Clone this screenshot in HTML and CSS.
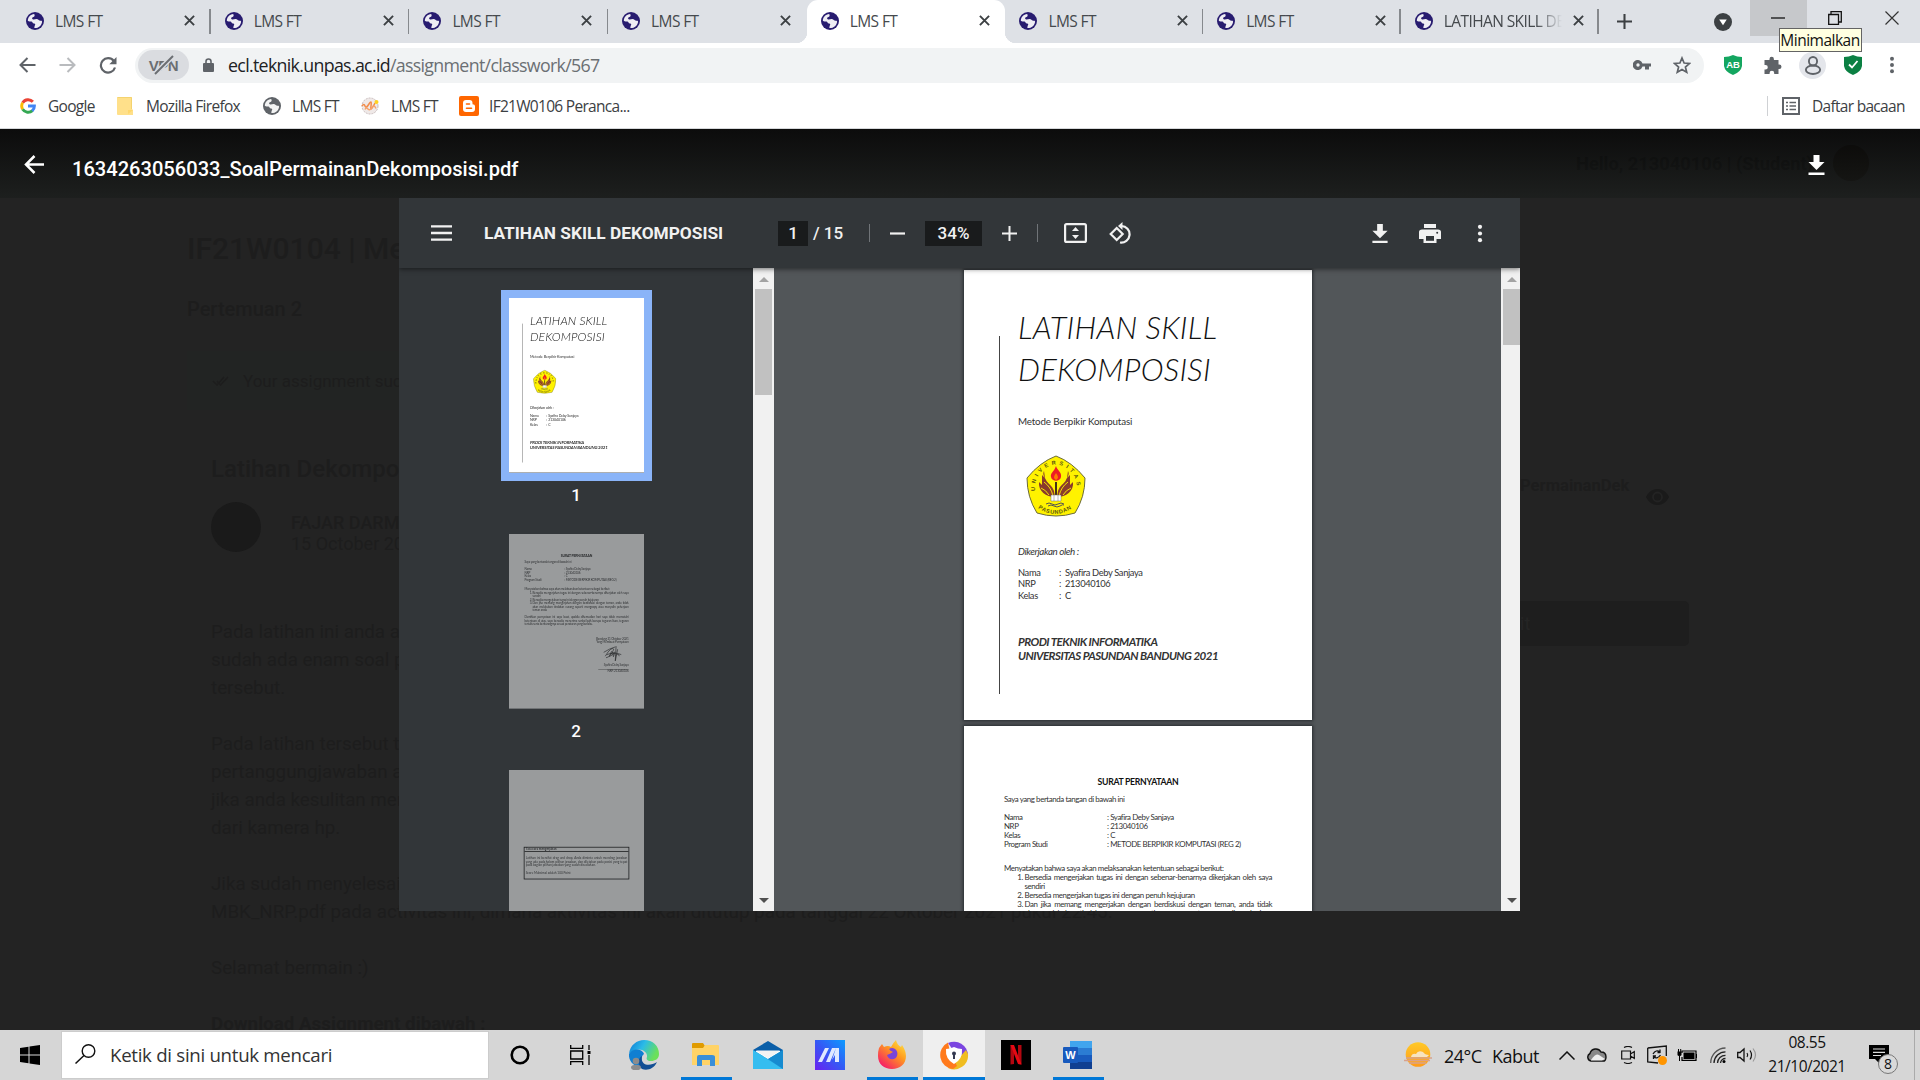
FILE: index.html
```html
<!DOCTYPE html>
<html lang="id">
<head>
<meta charset="utf-8">
<title>LMS FT</title>
<link rel="stylesheet" href="styles.css">
</head>
<body>
<svg class="defs" aria-hidden="true">
  <symbol id="globe" viewBox="0 0 18 18"><circle cx="9" cy="9" r="9" fill="currentColor"/><path d="M8.2 1.9C4.5 2.2 1.9 5 1.8 8.700C3 9.800 4.200 9 5.500 9.600C7 10.200 6.200 11.500 8 11.600C9.600 11.700 9.500 13 8.600 14L8.300 16.100C12.600 16.300 16 13 16.100 9.400C15.700 8.300 14.600 8.900 13.500 8.500C12 8 12.300 6.900 10.500 7C8.900 7.100 8 8.100 6.700 7.200C5.500 6.400 6.300 5.200 7.500 4.900C8.900 4.500 8.900 3.100 8.200 1.900Z" fill="#fff" opacity=".92"/></symbol>
  <symbol id="x" viewBox="0 0 12 12"><path d="M1 1L11 11M11 1L1 11" stroke="#3c4043" stroke-width="2.100" fill="none"/></symbol>
  <symbol id="dl" viewBox="0 0 16 20"><path d="M5 0H11V7H16L8 15L0 7H5ZM0 17.500H16V20H0Z" fill="currentColor"/></symbol>
  <symbol id="dots" viewBox="0 0 6 20"><g fill="currentColor"><circle cx="3" cy="3" r="2.200"/><circle cx="3" cy="10" r="2.200"/><circle cx="3" cy="17" r="2.200"/></g></symbol>
  <symbol id="crest" viewBox="0 0 60 62">
    <path d="M30 1Q46 7 59 23Q59 42 49 58Q30 64 11 58Q1 42 1 23Q14 7 30 1Z" fill="#fff200" stroke="#6b6b3a" stroke-width="1"/>
    <path d="M18 16C16 20 19 22 20 25C22 29 26 30 28 36L29 42C20 42 12 36 13 27L16 30V20L19 23ZM42 16C44 20 41 22 40 25C38 29 34 30 32 36L31 42C40 42 48 36 47 27L44 30V20L41 23Z" fill="#8a3b2c"/>
    <path d="M18 27Q25 32 27 41M42 27Q35 32 33 41M15 33Q20 35 23 40M45 33Q40 35 37 40" stroke="#fff200" stroke-width=".9" fill="none"/>
    <path d="M30 11C31 15 36 17 35 22C34 27 26 27 25 22C24 18 28 17 30 11Z" fill="#ed1c24"/><path d="M30 18Q34 23 30 25Q26 23 30 18Z" fill="#ff7a00"/>
    <path d="M29 27H31V40H29Z" fill="#443018"/>
    <path d="M25 40H35V46H25Z" fill="#fff" stroke="#776" stroke-width=".5"/><path d="M28 40V46M32 40V46" stroke="#776" stroke-width=".5"/>
    <path d="M20 49Q23 47 26 49T32 49T38 49M22 51Q25 49 28 51T34 51T38 50" fill="none" stroke="#555" stroke-width="1"/>
    <path id="arcTop" d="M9 36C8 18 21 10 30 9.500C39 10 52 18 51 36" fill="none"/>
    <path id="arcBottom" d="M12 53Q30 66 49 51" fill="none"/>
    <text font-size="5.600" class="crest-text"><textPath href="#arcTop" textLength="70">UNIVERSITAS</textPath></text>
    <text font-size="5.600" class="crest-text"><textPath href="#arcBottom" textLength="36">PASUNDAN</textPath></text>
  </symbol>
</svg>

<header class="browser">
  <div class="tabs">
    <div class="tab"><svg class="fav"><use href="#globe"/></svg><span>LMS FT</span><svg class="close"><use href="#x"/></svg></div>
    <div class="tab"><svg class="fav"><use href="#globe"/></svg><span>LMS FT</span><svg class="close"><use href="#x"/></svg></div>
    <div class="tab"><svg class="fav"><use href="#globe"/></svg><span>LMS FT</span><svg class="close"><use href="#x"/></svg></div>
    <div class="tab bare"><svg class="fav"><use href="#globe"/></svg><span>LMS FT</span><svg class="close"><use href="#x"/></svg></div>
    <div class="tab active"><svg class="fav"><use href="#globe"/></svg><span>LMS FT</span><svg class="close"><use href="#x"/></svg></div>
    <div class="tab late"><svg class="fav"><use href="#globe"/></svg><span>LMS FT</span><svg class="close"><use href="#x"/></svg></div>
    <div class="tab late"><svg class="fav"><use href="#globe"/></svg><span>LMS FT</span><svg class="close"><use href="#x"/></svg></div>
    <div class="tab late"><svg class="fav"><use href="#globe"/></svg><span class="long">LATIHAN SKILL DEK</span><svg class="close"><use href="#x"/></svg></div>
    <svg class="newtab" viewBox="0 0 16 16"><path d="M8 0V16M0 8H16" stroke="#3c4043" stroke-width="2.200"/></svg>
    <svg class="tabsearch" viewBox="0 0 18 18"><circle cx="9" cy="9" r="9" fill="#3c4043"/><path d="M5.200 6.500H12.800L9 12.300Z" fill="#fff"/></svg>
    <div class="win win-min"><svg width="14" height="14" viewBox="0 0 14 14"><path d="M0 7H14" stroke="#111" stroke-width="1.300"/></svg><span class="tooltip">Minimalkan</span></div>
    <div class="win"><svg width="14" height="14" viewBox="0 0 14 14"><path d="M.7 3.500H10.500V13.300H.7ZM3 3.500V.7H13.300V11H10.500" stroke="#111" stroke-width="1.300" fill="none"/></svg></div>
    <div class="win win-x"><svg width="14" height="14" viewBox="0 0 14 14"><path d="M.5 .5L13.500 13.500M13.500 .5L.5 13.500" stroke="#333" stroke-width="1.200"/></svg></div>
  </div>

  <div class="toolbar">
    <svg class="nav" width="17" height="16" viewBox="0 0 17 16"><path d="M16.500 8H1.500M8.500 1L1.500 8L8.500 15" fill="none" stroke="#5f6368" stroke-width="2"/></svg>
    <svg class="nav" width="17" height="16" viewBox="0 0 17 16"><path d="M.5 8H15.500M8.500 1L15.500 8L8.500 15" fill="none" stroke="#b9bbbe" stroke-width="2"/></svg>
    <svg class="nav" width="18" height="17" viewBox="0 0 18 17"><path d="M14.800 4A7.200 7.200 0 1 0 16 10.500" fill="none" stroke="#5f6368" stroke-width="2.200"/><path d="M17.500 0V7.200H10.300Z" fill="#5f6368"/></svg>
    <div class="omnibox">
      <div class="vpn"><span>VPN</span><svg viewBox="0 0 24 20"><path d="M3 19L21 1" stroke="#dadce0" stroke-width="5"/><path d="M3 19L21 1" stroke="#6b6e72" stroke-width="2"/></svg></div>
      <svg class="lock" viewBox="0 0 11 14"><path d="M3 6V3.500A2.500 2.500 0 0 1 8 3.500V6" fill="none" stroke="#5f6368" stroke-width="1.600"/><rect y="5" width="11" height="9" rx="1" fill="#5f6368"/></svg>
      <div class="url"><b>ecl.teknik.unpas.ac.id</b>/assignment/classwork/567</div>
      <svg class="key" viewBox="0 0 18 10"><path d="M9.500 3.500A5 5 0 1 0 9.500 6.500H12V9.500H16V6.500H18V3.500ZM5 3.300A1.700 1.700 0 1 1 5 6.700A1.700 1.700 0 0 1 5 3.300Z" fill="#5f6368" fill-rule="evenodd"/></svg>
      <svg class="star" viewBox="0 0 18 17"><path d="M9 1.500L11.100 6.500L16.500 7L12.400 10.500L13.700 15.700L9 12.900L4.300 15.700L5.600 10.500L1.500 7L6.900 6.500Z" fill="none" stroke="#5f6368" stroke-width="1.700"/></svg>
    </div>
    <svg class="ext shield" viewBox="0 0 18 20"><path d="M9 0Q13 2 18 2V11Q17 17 9 20Q1 17 0 11V2Q5 2 9 0Z" fill="#14a660"/><text x="9" y="13" class="ab" text-anchor="middle">AB</text></svg>
    <svg class="ext puzzle" viewBox="0 0 18 18"><path d="M2 4H6V3A2.200 2.200 0 0 1 10.400 3V4H15V8.500H15.700A2.300 2.300 0 0 1 15.700 13.100H15V18H10.700V17A2.300 2.300 0 0 0 6.100 17V18H1V13.500H2A2.300 2.300 0 0 0 2 8.900H1V4Z" fill="#5f6368"/></svg>
    <div class="ext person"><svg viewBox="0 0 18 20"><ellipse cx="9" cy="5.500" rx="4.300" ry="4.500" fill="none" stroke="#5f6368" stroke-width="2"/><ellipse cx="9" cy="14.500" rx="7.500" ry="4.500" fill="none" stroke="#5f6368" stroke-width="2"/></svg></div>
    <svg class="ext shield" viewBox="0 0 18 20"><path d="M9 0Q13 2 18 2V11Q17 17 9 20Q1 17 0 11V2Q5 2 9 0Z" fill="#0b8043"/><path d="M5 9.500L8 12.500L13.500 6" fill="none" stroke="#fff" stroke-width="1.800"/></svg>
    <svg class="ext kebab"><use href="#dots"/></svg>
  </div>

  <div class="bookmarks">
    <svg class="bk bk-g" viewBox="0 0 18 18"><g fill="none" stroke-width="3.300"><path d="M3 5.300A7.200 7.200 0 0 1 14.500 4.300" stroke="#ea4335"/><path d="M3 12.700A7.200 7.200 0 0 1 3 5.300" stroke="#fbbc05"/><path d="M14 14.200A7.200 7.200 0 0 1 3 12.700" stroke="#34a853"/><path d="M9 9H16.200A7.200 7.200 0 0 1 13.700 14.500" stroke="#4285f4"/></g></svg>
    <span class="bt w1">Google</span>
    <svg class="bk bk-note" viewBox="0 0 16 18"><path d="M1 0H14Q15 0 15 1V12L16 13V18H1Q0 18 0 17V1Q0 0 1 0Z" fill="#ffe08a"/><path d="M16 13H11V17" fill="#ffd76b"/><path d="M.5 .5H14.500V12" fill="none" stroke="#f4d36f"/></svg>
    <span class="bt w2">Mozilla Firefox</span>
    <svg class="bk bk-globe"><use href="#globe"/></svg>
    <span class="bt w3">LMS FT</span>
    <svg class="bk bk-lms" viewBox="0 0 18 18"><circle cx="9" cy="9" r="8" fill="#efe9e8" stroke="#c9bdbd" stroke-dasharray="2 1"/><path d="M1 9Q3 6 4 9T8 7T10 9T14 6" fill="none" stroke="#f28c4b" stroke-width="1.500"/><path d="M4 12.500Q5 10 7 12T11 10.500T15 11.500" fill="none" stroke="#f5a36c" stroke-width="1.500"/><circle cx="15.500" cy="5" r="2" fill="#ffd21f"/></svg>
    <span class="bt w3">LMS FT</span>
    <svg class="bk bk-blog" viewBox="0 0 20 20"><rect width="20" height="20" rx="2" fill="#ff6600"/><path d="M7 4H10.500Q13.500 4 13.500 7V8.300Q16 8.300 16 10V13Q16 16 13 16H7Q4 16 4 13V7Q4 4 7 4Z" fill="#fff"/><path d="M7.500 8H10.500M7.500 12.300H12.500" stroke="#ff6600" stroke-width="1.600" stroke-linecap="round"/></svg>
    <span class="bt w4">IF21W0106 Peranca...</span>
    <div class="reading"><svg viewBox="0 0 18 18"><rect x="1" y="1" width="16" height="16" fill="none" stroke="#5f6368" stroke-width="2"/><path d="M4 5.500H6M4 9H6M4 12.500H6M7.500 5.500H14M7.500 9H14M7.500 12.500H14" stroke="#5f6368" stroke-width="1.500"/></svg><span class="bt">Daftar bacaan</span></div>
  </div>
</header>

<main class="content">
  <section class="course">
    <div class="hello"><b>Hello, 213040106 | (Student)</b><i class="hello-avatar"></i></div>
    <h1>IF21W0104 | Metode Berpikir</h1>
    <h2>Pertemuan 2</h2>
    <div class="alert"><svg width="17" height="10" viewBox="0 0 17 10"><path d="M1 5L5 9L12 1M5 5L8.500 9L16 1" fill="none" stroke="#1d1d1d" stroke-width="1.500"/></svg>Your assignment successfully</div>
    <div class="columns">
      <article>
        <h3>Latihan Dekomposisi</h3>
        <div class="author"><i></i><div><b>FAJAR DARMAWAN</b><span>15 October 2021</span></div></div>
        <p>Pada latihan ini anda akan bermain<br>sudah ada enam soal permainan<br>tersebut.</p>
        <p>Pada latihan tersebut terdapat<br>pertanggungjawaban anda<br>jika anda kesulitan mengerjakan<br>dari kamera hp.</p>
        <p>Jika sudah menyelesaikan<br>MBK_NRP.pdf pada activitas ini, dimana aktivitas ini akan ditutup pada tanggal 22 Oktober 2021 pukul 22:45.</p>
        <p>Selamat bermain :)</p>
        <p><b>Download Assignment dibawah :</b></p>
      </article>
      <aside>
        <div class="file"><b>PermainanDek</b><svg width="23" height="16" viewBox="0 0 23 16"><path d="M0 8Q4 0 11.500 0T23 8Q19 16 11.500 16T0 8Z" fill="#1a1a1a"/><circle cx="11.500" cy="8" r="4.500" fill="none" stroke="#232323" stroke-width="1.800"/></svg></div>
        <div class="submit">it</div>
      </aside>
    </div>
  </section>

  <section class="lightbox">
    <div class="filebar">
      <svg width="20" height="19" viewBox="0 0 20 19"><path d="M20 9.500H2M10.500 1L2 9.500L10.500 18" fill="none" stroke="#fff" stroke-width="2.500"/></svg>
      <span>1634263056033_SoalPermainanDekomposisi.pdf</span>
      <svg class="save" width="17" height="20" preserveAspectRatio="none"><use href="#dl"/></svg>
    </div>
    <div class="viewer">
      <div class="pdfbar">
        <svg class="menu" viewBox="0 0 21 16"><path d="M0 1.300H21M0 8H21M0 14.700H21" stroke="#f1f1f1" stroke-width="2.300"/></svg>
        <strong>LATIHAN SKILL DEKOMPOSISI</strong>
        <span class="num page-no">1</span><span class="total">/ 15</span>
        <i class="sep"></i>
        <svg class="minus" width="15" height="15" viewBox="0 0 15 15"><path d="M0 7.500H15" stroke="#f1f1f1" stroke-width="2.200"/></svg>
        <span class="num pct">34%</span>
        <svg class="plus" width="15" height="15" viewBox="0 0 15 15"><path d="M0 7.500H15M7.500 0V15" stroke="#f1f1f1" stroke-width="2"/></svg>
        <i class="sep"></i>
        <svg class="fit" width="23" height="20" viewBox="0 0 23 20"><rect x="1.100" y="1.100" width="20.800" height="17.800" rx="1.500" fill="none" stroke="#f1f1f1" stroke-width="2.200"/><path d="M8 8H15L11.500 4ZM8 12H15L11.500 16Z" fill="#f1f1f1"/></svg>
        <svg class="rot" width="23" height="22" viewBox="0 0 23 22"><path d="M7 6L13 12L7 18L1 12Z" transform="translate(.7 0)" fill="none" stroke="#f1f1f1" stroke-width="2.200"/><path d="M12.500 4A8.300 8.300 0 1 1 11 20.500" fill="none" stroke="#f1f1f1" stroke-width="2.200"/><path d="M13.500 0V8L9 4Z" fill="#f1f1f1"/></svg>
        <svg class="pdl" width="16" height="19" preserveAspectRatio="none"><use href="#dl"/></svg>
        <svg class="print" width="22" height="19" viewBox="0 0 22 19"><path d="M5 0H17V4H5ZM3 5.500H19Q22 5.500 22 8V15H17.500V19H4.500V15H0V8Q0 5.500 3 5.500Z" fill="#f1f1f1"/><path d="M7 12H15V16.800H7Z" fill="#323639"/><circle cx="18.200" cy="8.800" r="1" fill="#323639"/></svg>
        <svg class="pdots"><use href="#dots"/></svg>
      </div>
      <div class="pdfbody">
        <div class="thumbs">
          <div class="thumb selected"><div class="sheet cover">
            <div class="cover-in"><div class="title">LATIHAN SKILL<br>DEKOMPOSISI</div><div class="sub">Metode Berpikir Komputasi</div><svg class="crest"><use href="#crest"/></svg><div class="by">Dikerjakan oleh :</div>
            <div class="idrow"><span>Nama</span><span>:</span><span>Syafira Deby Sanjaya</span></div><div class="idrow"><span>NRP</span><span>:</span><span>213040106</span></div><div class="idrow"><span>Kelas</span><span>:</span><span>C</span></div>
            <div class="prodi">PRODI TEKNIK INFORMATIKA<br>UNIVERSITAS PASUNDAN BANDUNG 2021</div></div>
          </div></div>
          <div class="label">1</div>
          <div class="thumb"><div class="sheet letter">
            <div class="lt">SURAT PERNYATAAN</div><div class="gap9">Saya yang bertanda tangan di bawah ini</div>
            <div class="rows"><div><span>Nama</span>: Syafira Deby Sanjaya</div><div><span>NRP</span>: 213040106</div><div><span>Kelas</span>: C</div><div><span>Program Studi</span>: METODE BERPIKIR KOMPUTASI (REG 2)</div></div>
            <div class="gap15">Menyatakan bahwa saya akan melaksanakan ketentuan sebagai berikut:</div>
            <ol><li>Bersedia mengerjakan tugas ini dengan sebenar-benarnya dikerjakan oleh saya sendiri</li><li>Bersedia mengerjakan tugas ini dengan penuh kejujuran</li><li>Dan jika memang mengerjakan dengan berdiskusi dengan teman, anda tidak akan melakukan tindakan curang seperti mengcopy atau menyalin pekerjaan teman anda.</li></ol>
            <div class="close-par">Demikian pernyataan ini saya buat, apabila dikemudian hari saya tidak mematuhi ketentuan di atas, saya bersedia menerima sanksi baik berupa teguran lisan, teguran tertulis serta berkurangnya sesuai peraturan yang berlaku.</div>
            <div class="sign">Bandung 21 Oktober 2021<br>Yang Membuat Pernyataan<svg viewBox="0 0 50 42"><path d="M8 28Q24 2 30 10Q22 30 10 32M4 18Q20 8 34 4M18 30L24 16Q34 22 20 28M28 28Q30 14 33 18L29 30M36 2L34 40L40 10M12 24Q30 16 50 24M36 26Q42 18 44 28" fill="none" stroke="#111" stroke-width="1.600"/></svg>Syafira Deby Sanjaya<u></u>NRP. 213040106</div>
          </div></div>
          <div class="label">2</div>
          <div class="thumb"><div class="sheet rules"><div class="box"><b>Tata cara mengerjakan</b><p>Latihan ini bersifat drag and drop, Anda diminta untuk mendrag jawaban yang ada pada kolom pilihan jawaban, dan diletakan pada posisi yang tepat pada bagian pilihan jawaban yang sudah disediakan.</p><p>Score Maksimal adalah 100 Point</p></div></div></div>
        </div>
        <div class="scroll"><i class="up"></i><i class="handle"></i><i class="down"></i></div>
        <div class="pages">
          <div class="sheet cover">
            <div class="cover-in"><div class="title">LATIHAN SKILL<br>DEKOMPOSISI</div><div class="sub">Metode Berpikir Komputasi</div><svg class="crest"><use href="#crest"/></svg><div class="by">Dikerjakan oleh :</div>
            <div class="idrow"><span>Nama</span><span>:</span><span>Syafira Deby Sanjaya</span></div><div class="idrow"><span>NRP</span><span>:</span><span>213040106</span></div><div class="idrow"><span>Kelas</span><span>:</span><span>C</span></div>
            <div class="prodi">PRODI TEKNIK INFORMATIKA<br>UNIVERSITAS PASUNDAN BANDUNG 2021</div></div>
          </div>
          <div class="sheet letter">
            <div class="lt">SURAT PERNYATAAN</div><div class="gap9">Saya yang bertanda tangan di bawah ini</div>
            <div class="rows"><div><span>Nama</span>: Syafira Deby Sanjaya</div><div><span>NRP</span>: 213040106</div><div><span>Kelas</span>: C</div><div><span>Program Studi</span>: METODE BERPIKIR KOMPUTASI (REG 2)</div></div>
            <div class="gap15">Menyatakan bahwa saya akan melaksanakan ketentuan sebagai berikut:</div>
            <ol><li>Bersedia mengerjakan tugas ini dengan sebenar-benarnya dikerjakan oleh saya sendiri</li><li>Bersedia mengerjakan tugas ini dengan penuh kejujuran</li><li>Dan jika memang mengerjakan dengan berdiskusi dengan teman, anda tidak akan melakukan tindakan curang seperti mengcopy atau menyalin pekerjaan teman anda.</li></ol>
          </div>
        </div>
        <div class="scroll right"><i class="up"></i><i class="handle"></i><i class="down"></i></div>
      </div>
    </div>
  </section>
</main>

<footer class="taskbar">
  <div class="start"><svg width="20" height="20" viewBox="0 0 20 20"><path d="M0 3L8.500 1.700V9.500H0ZM9.500 1.500L20 0V9.500H9.500ZM0 10.500H8.500V18.300L0 17ZM9.500 10.500H20V20L9.500 18.500Z"/></svg></div>
  <div class="search"><svg width="21" height="20" viewBox="0 0 21 20"><circle cx="13.500" cy="7" r="6.300" fill="none" stroke="#111" stroke-width="1.400"/><path d="M9 11.500L.5 19.500" stroke="#111" stroke-width="1.500"/></svg><span>Ketik di sini untuk mencari</span></div>
  <div class="cortana"><svg width="20" height="20" viewBox="0 0 20 20"><circle cx="10" cy="10" r="8.300" fill="none" stroke="#000" stroke-width="2.600"/></svg></div>
  <div class="taskview"><svg width="21" height="20" viewBox="0 0 21 20"><path d="M.7 0V3.300H12.700V0M.7 20V16.700H12.700V20M.7 6H12.700V14H.7ZM19 0V5M19 10V20" fill="none" stroke="#000" stroke-width="1.300"/><path d="M17.500 6H20.500V9H17.500Z"/></svg></div>
  <div class="apps">
    <div class="app"><svg viewBox="0 0 30 30"><defs><linearGradient id="ed" x2="1" y2=".4"><stop stop-color="#0c78d4"/><stop offset=".5" stop-color="#2bbbe8"/><stop offset="1" stop-color="#6be05a"/></linearGradient></defs><path d="M0 14C1 5 8 0 15 0C24 0 30 6 30 14C30 19 26 21 22 21C18 21 17 19 18 17C19 12 12 8 7 10C3 11 0 14 0 14Z" fill="url(#ed)"/><path d="M0 14C4 7 14 9 15 14C11 17 12 24 18 27C8 30 -1 22 0 14Z" fill="#0f7fd2"/><path d="M13 16C11 25 20 27 28 22C25 29 18 31 13 29C8 25 9 18 13 16Z" fill="#134f94"/><circle cx="7" cy="21" r="3.300" fill="#8c8c8c"/><ellipse cx="7" cy="27.500" rx="5" ry="2.800" fill="#8c8c8c"/></svg></div>
    <div class="app run"><svg viewBox="0 0 30 30"><path d="M1 4Q1 3 2 3H12L14 6H28V12H1Z" fill="#e09b00"/><path d="M1 8H12L14 5H27Q28 5 28 6V25H1Z" fill="#ffd367"/><path d="M6 26V17Q6 15 8 15H21Q24 15 24 17V26H19V20H11V26Z" fill="#3a8fd8"/></svg></div>
    <div class="app"><svg viewBox="0 0 30 30"><path d="M0 10L15 1L30 10V14H0Z" fill="#0a5ea8"/><path d="M3 11H27V18L15 25L3 18Z" fill="#fff"/><path d="M0 10L15 19L30 10V29H0Z" fill="#29a8e0"/><path d="M0 10V29H30Z" fill="#35bdf0"/><path d="M15 19L30 29V10Z" fill="#168bd0"/><path d="M3 10.500H27L15 18.500Z" fill="#f3f3f3"/></svg></div>
    <div class="app"><svg viewBox="0 0 30 30"><defs><linearGradient id="ar" x1="0" y1="1" x2="1" y2="0"><stop stop-color="#6b21f0"/><stop offset=".5" stop-color="#3459f5"/><stop offset="1" stop-color="#0b9cff"/></linearGradient></defs><path d="M0 0H30V30H0Z" fill="url(#ar)"/><path d="M10 8H14L7 22H3ZM17 8H21L15 22H11ZM21 8H24V22H20V15L17 20Z" fill="#dfe8ff"/></svg></div>
    <div class="app run"><svg viewBox="0 0 30 30"><defs><linearGradient id="fx" x1="1" y1="0" x2=".2" y2="1"><stop stop-color="#fff04a"/><stop offset=".45" stop-color="#ff9a1f"/><stop offset="1" stop-color="#f5156c"/></linearGradient></defs><path d="M2 8L5 4L7 7Q11 5 14 7Q16 3 19 0Q20 5 24 7L25 5Q29 11 29 16C29 24 23 29 15 29C7 29 1 24 1 16Q1 11 2 8Z" fill="url(#fx)"/><path d="M12 9C17 6 22 11 20 16C18 21 11 20 10 15Q13 14 16 12Q13 11 12 9Z" fill="#7a45d8"/></svg></div>
    <div class="app run on"><svg viewBox="0 0 30 30"><path d="M9 3A14 14 0 0 1 29 15L28 18L14 10Z" fill="#7b45e0"/><path d="M29 14A14 14 0 0 1 9 28L20 18L27 10Z" fill="#f0bd21"/><path d="M14 29A14 14 0 0 1 9 2.500L11 12L18 26Z" fill="#ff7a1c"/><path d="M15 7Q19 9 23 9Q24 19 15 24Q6 19 7 9Q11 9 15 7Z" fill="#fff"/><circle cx="15" cy="13.500" r="2" fill="#343a50"/><path d="M14 14H16V19H14Z" fill="#343a50"/></svg></div>
    <div class="app"><svg viewBox="0 0 30 30"><path d="M0 0H30V30H0Z"/><path d="M9.500 5H13V24L9.500 24.500ZM17 5H20.500V24.500L17 24Z" fill="#b20710"/><path d="M9.500 5H13L20.500 24.500L17 24Z" fill="#e50914"/></svg></div>
    <div class="app run"><svg viewBox="0 0 30 30"><path d="M7 1H29V8H7Z" fill="#41a5ee"/><path d="M7 8H29V15H7Z" fill="#2b7cd3"/><path d="M7 15H29V22H7Z" fill="#185abd"/><path d="M7 22H29V29H7Z" fill="#103f91"/><rect y="7" width="15" height="16" rx="1" fill="#185abd"/><text x="7.500" y="19" text-anchor="middle" class="word">W</text></svg></div>
  </div>
  <div class="weather"><svg width="28" height="26" viewBox="0 0 28 26"><defs><linearGradient id="sun" y2="1" x2="0"><stop stop-color="#ffc928"/><stop offset="1" stop-color="#ff9c1a"/></linearGradient></defs><circle cx="14" cy="12.500" r="12.300" fill="url(#sun)"/><path d="M7 15Q8 11 12 12Q14 8 19 10Q21 13 25 13L23 15Z" fill="#f7e3c0"/><path d="M2 16H28M0 18.500H26M5 21H22" stroke="#d9a28b" stroke-width="1.500"/></svg><span class="temp">24°C</span><span>Kabut</span></div>
  <div class="tray">
    <svg class="t1" viewBox="0 0 16 9"><path d="M.5 8.500L8 1L15.500 8.500" fill="none" stroke="#111" stroke-width="1.500"/></svg>
    <svg class="t2" viewBox="0 0 20 14"><path d="M4 13A4 4 0 0 1 3 5.500A6 6 0 0 1 14 4Q19 4 19 9T15 13Z" fill="#888" stroke="#111" stroke-width="1.400"/><path d="M4 12Q9 5 12 7L18 11L15 12.500H4Z" fill="#eee"/></svg>
    <svg class="t3" viewBox="0 0 14 18"><path d="M3 1.500Q7-.5 11 1.500M3 16.500Q7 18.500 11 16.500M.7 5H9.500V13H.7ZM9.500 8L13.300 5.500V12.500L9.500 10" fill="none" stroke="#111" stroke-width="1.200"/></svg>
    <svg class="t4" viewBox="0 0 20 20"><path d="M.7 3L19.300 1V11M.7 3V17L11 18" fill="none" stroke="#111" stroke-width="1.300"/><path d="M6 9Q9 4 13 7V4.500M13 7.500H10.500M13.500 10Q10 15 6.500 11.500V14M6 11H9" fill="none" stroke="#111" stroke-width="1.300"/><circle cx="15.500" cy="15.500" r="4.500" fill="#ff9500"/></svg>
    <svg class="t5" viewBox="0 0 20 14"><path d="M5 5V3H19V12.300H5V9" fill="none" stroke="#000" stroke-width="1.200"/><path d="M6.500 4.500H17.500V11H6.500ZM19 6H20V10H19ZM.5 3.500H4.500V7Q4.500 8 2.500 8T.5 7ZM2 8H3V13H2ZM1 1H2V4H1ZM3.200 1H4.200V4H3.200Z"/></svg>
    <svg class="t6" viewBox="0 0 16 16"><g fill="none" stroke-width="1.300"><path d="M.7 16A15 15 0 0 1 15.500 1" stroke="#555"/><path d="M4 16A11.500 11.500 0 0 1 15.500 4.800M7.500 16A8 8 0 0 1 15.500 8.300M10.500 16A5 5 0 0 1 15.500 11.500" stroke="#222"/></g><circle cx="14" cy="14.500" r="1.500"/></svg>
    <svg class="t7" viewBox="0 0 20 16"><path d="M.7 5.500H3L7 2V14L3 10.500H.7Z" fill="none" stroke="#111" stroke-width="1.300"/><path d="M10 6Q11.500 8 10 10M13 3.500Q16 8 13 12.500" fill="none" stroke="#111" stroke-width="1.200"/><path d="M16 1.500Q21 8 16 14.500" fill="none" stroke="#999" stroke-width="1.200"/></svg>
  </div>
  <div class="clock"><span>08.55</span><span>21/10/2021</span></div>
  <div class="notif"><svg width="20" height="20" viewBox="0 0 20 20"><path d="M0 0H20V14H11V19L6 14H0Z"/><path d="M4 4H16M4 7.300H16M4 10.500H12" stroke="#ddd" stroke-width="1.200"/></svg><span>8</span></div>
</footer>
</body>
</html>
```
FILE: styles.css
```css
* { box-sizing: border-box; }
body { margin: 0; width: 1920px; height: 1080px; overflow: hidden; display: flex; flex-direction: column; font-family: "Open Sans", "Noto Sans", sans-serif; background: #232323; }
svg { display: block; flex: none; }
.defs { position: absolute; width: 0; height: 0; }
.crest-text { font-family: "Liberation Sans", sans-serif; font-weight: bold; fill: #5b5510; }

/* browser frame */
.browser { height: 129px; flex: none; background: #fff; border-bottom: 1px solid #d5d7da; }
.tabs { height: 43px; padding-left: 12px; display: flex; background: #dee1e6; }
.tab { width: 198.700px; height: 43px; padding: 0 0 2px 14px; display: flex; align-items: center; position: relative; color: #45494d; font-size: 15.500px; letter-spacing: -.6px; flex: none; }
.tab.late { width: 197.700px; }
.tab::after { content: ""; position: absolute; right: 0; top: 9px; width: 1.500px; height: 25px; background: #86898d; }
.tab.bare::after, .tab.active::after { display: none; }
.tab.active { background: #fff; border-radius: 11px 11px 0 0; }
.tab.active::before { content: ""; position: absolute; left: -11px; right: -11px; bottom: 0; height: 11px; background: radial-gradient(circle at 0 0, transparent 11px, #fff 11.500px) left / 11px 11px no-repeat, radial-gradient(circle at 100% 0, transparent 11px, #fff 11.500px) right / 11px 11px no-repeat; }
.fav { width: 18px; height: 18px; color: #281c70; margin-right: 11px; }
.tab span { width: 129px; white-space: nowrap; }
.tab .long { width: 118px; overflow: hidden; margin-right: 11px; -webkit-mask: linear-gradient(90deg, #000 78%, transparent); mask: linear-gradient(90deg, #000 78%, transparent); }
.close { width: 11px; height: 11px; }
.newtab { width: 15px; height: 15px; margin: 14px 0 0 18px; }
.tabsearch { width: 18px; height: 18px; margin: 13px 18px 0 82px; }
.win { width: 56px; height: 36px; display: grid; place-items: center; position: relative; flex: none; }
.win-min { background: #c6c8cb; width: 57px; }
.win-x { width: 58px; }
.tooltip { position: absolute; z-index: 5; left: 29px; top: 28px; width: 83px; height: 24px; line-height: 23px; background: #ffffe1; border: 1px solid #646464; color: #111; font-size: 15.500px; letter-spacing: -.5px; text-align: center; }
.toolbar { height: 44px; padding-left: 19px; display: flex; align-items: center; }
.nav { margin-right: 23px; }
.nav:nth-child(3) { margin-right: 18px; }
.omnibox { width: 1569px; height: 35px; border-radius: 18px; background: #f1f3f4; display: flex; align-items: center; padding-left: 3px; flex: none; }
.vpn { width: 51px; height: 30px; border-radius: 15px; background: #dadce0; display: grid; place-items: center; font: 700 15px "Liberation Sans", sans-serif; letter-spacing: -.5px; color: #6b6e72; flex: none; }
.vpn > * { grid-area: 1 / 1; }
.vpn svg { width: 24px; height: 20px; }
.lock { width: 11px; height: 14px; margin: 0 14px; }
.url { width: 1405px; flex: none; font-size: 17.800px; letter-spacing: -.68px; color: #6b6f73; margin-top: -1px; white-space: nowrap; }
.url b { font-weight: 400; color: #202124; }
.key { width: 18px; height: 10px; margin-right: 22px; }
.star { width: 18px; height: 18px; }
.ext.shield { width: 18px; height: 20px; }
.omnibox + .shield { margin: 0 21px 0 20px; }
.ab { font: 700 9.500px "Liberation Sans", sans-serif; fill: #fff; }
.puzzle { width: 19px; height: 18px; margin-right: 17px; }
.person { width: 27px; height: 27px; border-radius: 50%; background: #e4e6eb; display: grid; place-items: center; margin-right: 18px; }
.person svg { width: 18px; height: 19px; }
.kebab { width: 6px; height: 18px; margin-left: 27px; color: #5f6368; }
.bookmarks { height: 36px; display: flex; align-items: center; padding-left: 20px; margin-top: 1px; color: #3c4043; }
.bt { font-size: 15.500px; letter-spacing: -.7px; white-space: nowrap; flex: none; }
.w1 { width: 69px; } .w2 { width: 117px; } .w3 { width: 69px; } .w4 { width: 1278px; }
.bk-g { width: 16px; height: 16px; margin-right: 12px; }
.bk-note { width: 16px; height: 18px; margin-right: 13px; }
.bk-globe { width: 18px; height: 18px; margin-right: 11px; color: #5f6368; }
.bk-lms { width: 18px; height: 18px; margin-right: 12px; }
.bk-blog { width: 20px; height: 20px; margin: 0 10px 0 -1px; }
.reading { height: 20px; padding-left: 14px; border-left: 1px solid #cfd1d4; display: flex; align-items: center; gap: 12px; }
.reading svg { width: 18px; height: 18px; }

/* dimmed course page */
.content { height: 901px; flex: none; position: relative; overflow: hidden; background: #232323; font-family: Roboto, sans-serif; }
.course { color: #1d1d1d; width: 1920px; padding: 0 0 0 187px; font-size: 18.800px; }
.course h1, .course h2, .course h3, .course p { margin: 0; white-space: nowrap; }
.hello { height: 69px; padding: 16px 51px 0 0; display: flex; justify-content: flex-end; align-items: flex-start; gap: 20px; font-size: 18.300px; line-height: 38px; color: #191919; }
.hello-avatar { width: 36px; height: 36px; border-radius: 50%; background: #1a1714; }
.course h1 { font-size: 30px; line-height: 40px; font-weight: 500; margin-top: 31px; }
.course h2 { font-size: 20px; line-height: 30px; font-weight: 500; margin-top: 25px; }
.alert { width: 1080px; height: 59px; margin-top: 27px; padding-left: 25px; display: flex; gap: 14px; align-items: center; background: #222423; font-size: 17px; }
.columns { display: flex; justify-content: space-between; padding: 44px 0 0 24px; }
.course h3 { font-size: 24px; line-height: 30px; font-weight: 500; }
.author { display: flex; gap: 30px; align-items: center; height: 50px; margin: 18px 0 66px; font-size: 18px; line-height: 21px; }
.author i { width: 50px; height: 50px; border-radius: 50%; background: #1a1a1a; }
.author div { margin-top: 12px; }
.author b, .author span { display: block; }
.author b { font-weight: 500; }
.course p { line-height: 28px; margin-bottom: 28px; }
article { width: 1000px; }
aside { width: 400px; padding-top: 21px; }
.file { display: flex; align-items: center; height: 32px; gap: 17px; font-size: 16.600px; }
.file b { margin: 0 0 12px; }
.file svg { margin-top: 12px; }
.submit { width: 169px; height: 45px; margin-top: 94px; border-radius: 0 5px 5px 0; background: #1e1e1e; color: #252525; font-size: 18px; line-height: 45px; }

/* overlaid file preview */
.lightbox { position: absolute; inset: 0; }
.filebar { height: 69px; padding: 2px 95px 0 24px; display: flex; align-items: center; background: linear-gradient(rgba(0,0,0,.66), rgba(24,28,26,.55)); color: #fff; }
.filebar span { margin: 9px 0 0 28px; font-size: 20.100px; font-weight: 500; white-space: nowrap; }
.save { margin-left: auto; color: #fff; }
.viewer { width: 1121px; height: 713px; margin-left: 399px; display: flex; flex-direction: column; background: #525659; overflow: hidden; }
.pdfbar { height: 70px; flex: none; position: relative; z-index: 1; display: flex; align-items: center; padding-left: 32px; background: #323639; color: #f1f1f1; box-shadow: 0 1px 5px rgba(0,0,0,.55); font-size: 17px; font-weight: 500; }
.menu { width: 21px; height: 16px; margin-right: 32px; }
.pdfbar strong { width: 294px; font-size: 17.300px; font-weight: 700; white-space: nowrap; flex: none; }
.num { height: 25px; line-height: 25px; text-align: center; background: #191b1c; flex: none; }
.page-no { width: 30px; }
.total { width: 61px; padding-left: 5px; flex: none; }
.sep { width: 1px; height: 18px; background: #707478; flex: none; }
.minus { margin: 0 20px; }
.pct { width: 57px; }
.plus { margin: 0 20px; }
.fit { margin: 0 22px 0 26px; }
.rot { margin-right: 240px; }
.print { margin: 0 36px 0 31px; }
.pdots { width: 6px; height: 19px; }
.pdfbody { height: 643px; display: flex; }
.thumbs { width: 354px; background: #323639; display: flex; flex-direction: column; align-items: center; padding: 30px 0 0 0; height: 643px; overflow: hidden; }
.thumb { width: 135px; height: 175px; flex: none; overflow: hidden; opacity: .5; }
.thumb.selected { opacity: 1; outline: 8px solid #8ab4f8; }
.thumb .sheet { transform: scale(.388); transform-origin: 0 0; box-shadow: none; }
.label { height: 61px; flex: none; padding-top: 10px; line-height: 24px; color: #fff; font-size: 17px; font-weight: 500; }
.scroll { width: 21px; padding: 7px 2px 8px; background: #f1f1f1; display: flex; flex-direction: column; align-items: center; }
.scroll.right { width: 19px; padding-right: 0; }
.up { border: 5px solid transparent; border-bottom-color: #a3a3a3; border-top: 0; margin: 2px 0 7px; }
.handle { width: 100%; height: 106px; background: #c1c1c1; margin-top: 0; }
.right .handle { height: 56px; }
.down { border: 5px solid transparent; border-top-color: #505050; border-bottom: 0; margin-top: auto; }
.pages { width: 727px; height: 643px; overflow: hidden; padding: 2px 0 0 190px; display: flex; flex-direction: column; gap: 6px; }

/* document sheets */
.sheet { width: 348px; height: 450px; flex: none; background: #fff; color: #333; box-shadow: 0 0 3px 1px rgba(20,24,28,.7); font-family: Lato, Carlito, sans-serif; font-size: 9.800px; }
.cover { padding: 66px 0 0 35px; }
.cover-in { height: 358px; border-left: 1.500px solid #444; padding-left: 18px; }
.title { margin-top: 0; height: 79.500px; line-height: 42px; font-size: 31px; font-weight: 300; font-style: italic; letter-spacing: .25px; color: #111; transform: translateY(-30.500px); white-space: nowrap; }
.sub { line-height: 12px; letter-spacing: -.15px; margin-top: -1px; }
.crest { width: 60px; height: 62px; margin: 28.500px 0 27.500px 8px; }
.by { line-height: 12px; font-style: italic; margin-bottom: 10px; letter-spacing: -.4px; }
.idrow { display: grid; grid-template-columns: 41px 6px 1fr; line-height: 11.700px; font-size: 9.300px; letter-spacing: -.35px; }
.prodi { margin-top: 33px; font-weight: 700; font-style: italic; font-size: 11.600px; line-height: 14.200px; letter-spacing: -.55px; white-space: nowrap; }
.letter { padding: 51px 40px 0; font-size: 7.900px; line-height: 9px; letter-spacing: -.41px; }
.lt { font-weight: 700; text-align: center; color: #111; font-size: 8.700px; letter-spacing: -.3px; }
.gap9 { margin: 9px 0; }
.rows span { display: inline-block; width: 103px; }
.rows { white-space: nowrap; }
.gap15 { margin-top: 15px; white-space: nowrap; }
.letter ol { margin: 0; padding-left: 20.500px; text-align: justify; }
.close-par { margin-top: 9px; text-align: justify; }
.sign { margin-top: 28px; text-align: right; }
.sign svg { width: 50px; height: 42px; margin: 4px 18px 4px auto; }
.sign u { display: block; width: 78px; border-top: 1px solid #333; margin: 6px 0 0 auto; }
.rules { padding: 198px 38px 0; font-size: 8px; line-height: 9px; }
.box { height: 84px; border: 2.500px solid #000; }
.box b { display: block; height: 11px; padding-left: 3px; border-bottom: 2.500px solid #000; }
.box p { margin: 12px 3px 0; text-align: justify; }

/* windows taskbar */
.taskbar { height: 50px; flex: none; background: #d6d6d6; display: flex; color: #111; }
.start { width: 61px; padding: 15px 0 0 20px; }
.search { width: 428px; height: 48px; margin-top: 1px; padding: 0 0 2px 13px; display: flex; align-items: center; gap: 14px; background: #fff; border: 1px solid #ccc; color: #333; font-size: 18.700px; letter-spacing: -.3px; }
.cortana { padding: 15px 0 0 21px; }
.taskview { padding: 15px 0 0 40px; }
.apps { display: flex; margin-left: 22px; }
.app { width: 62px; height: 50px; padding: 10px 0 0 16px; position: relative; }
.app svg { width: 30px; height: 30px; }
.app.on { background: #efefef; }
.app.run::after { content: ""; position: absolute; left: 6px; right: 5px; bottom: 0; height: 3px; background: #0078d7; }
.app.on::after { left: 0; right: 0; }
.word { font: 700 11px "Liberation Sans", sans-serif; fill: #fff; }
.weather { margin-left: 295px; display: flex; align-items: center; font-size: 18px; letter-spacing: -.5px; width: 155px; }
.temp { margin: 0 0 0 12px; width: 48px; }
.weather span { padding-top: 1px; white-space: nowrap; }
.tray { display: flex; align-items: center; width: 210px; }
.t1 { width: 16px; height: 9px; margin-right: 12px; }
.t2 { width: 20px; height: 14px; margin-right: 14px; }
.t3 { width: 14px; height: 18px; margin-right: 12px; }
.t4 { width: 20px; height: 20px; margin-right: 10px; }
.t5 { width: 20px; height: 14px; margin-right: 13px; }
.t6 { width: 16px; height: 16px; margin-right: 11px; }
.t7 { width: 20px; height: 16px; }
.clock { width: 76px; display: flex; flex-direction: column; align-items: center; padding-top: 1px; font-size: 15.500px; letter-spacing: -.5px; line-height: 23.500px; }
.notif { width: 69px; height: 50px; margin-left: auto; padding: 15px 0 0 23px; position: relative; margin-right: 5px; border-right: 1px solid #aaa; }
.notif span { position: absolute; left: 32px; top: 24px; width: 20px; height: 20px; border: 1px solid #777; border-radius: 50%; background: #d9d9d9; text-align: center; font-size: 14px; line-height: 18px; }
```
